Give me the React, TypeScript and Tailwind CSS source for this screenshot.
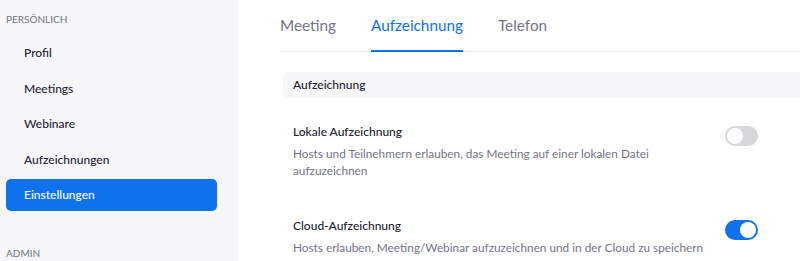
import React from "react";

const navItems = ["Profil", "Meetings", "Webinare", "Aufzeichnungen", "Einstellungen"];
const tabs = ["Meeting", "Aufzeichnung", "Telefon"];

function Toggle({ on }: { on: boolean }) {
  return (
    <div
      className={`w-[33px] h-[20px] rounded-full flex items-center p-[2px] shrink-0 ${
        on ? "bg-[#0e72ed] justify-end" : "bg-[#d6d6db] justify-start"
      }`}
    >
      <div className="w-[16px] h-[16px] rounded-full bg-white" />
    </div>
  );
}

function SettingRow({ title, desc, on }: { title: string; desc: string; on: boolean }) {
  return (
    <div className="flex items-start justify-between pl-[10px] pr-[42px]">
      <div className="max-w-[425px]">
        <div className="text-[12px] leading-[17px] font-medium text-[#232333]">{title}</div>
        <div className="mt-[5px] text-[11.8px] leading-[17px] text-[#747487]">{desc}</div>
      </div>
      <div className="mt-[2.5px]">
        <Toggle on={on} />
      </div>
    </div>
  );
}

export default function App() {
  return (
    <div className="flex w-[800px] h-[261px] overflow-hidden bg-white font-['Lato',sans-serif]">
      {/* Sidebar */}
      <aside className="w-[238px] shrink-0 bg-[#f7f7fa] px-[6px] pt-[12px]">
        <div className="text-[10px] leading-[14px] uppercase text-[#6e7680]">Persönlich</div>
        <nav className="mt-[11px] flex flex-col gap-[3.5px] w-[211px]">
          {navItems.map((item) => {
            const active = item === "Einstellungen";
            return (
              <div
                key={item}
                className={`h-8 flex items-center pl-[18px] rounded-[5px] text-[12px] font-medium ${
                  active ? "bg-[#0e72ed] text-white" : "text-[#232333]"
                }`}
              >
                {item}
              </div>
            );
          })}
        </nav>
        <div className="mt-[35px] text-[10px] leading-[14px] uppercase text-[#6e7680]">Admin</div>
      </aside>

      {/* Content */}
      <main className="flex-1 pl-[42px]">
        <div className="flex gap-[35px] h-[52px] border-b border-[#ededf0]">
          {tabs.map((tab) => {
            const active = tab === "Aufzeichnung";
            return (
              <div
                key={tab}
                className={`pt-[14px] text-[15.3px] leading-[22px] ${
                  active
                    ? "text-[#0e72ed] border-b-2 border-[#0e72ed] mb-[-1px]"
                    : "text-[#747487]"
                }`}
              >
                {tab}
              </div>
            );
          })}
        </div>

        <div className="ml-[3px]">
          <div className="mt-[20px] h-[26px] flex items-center pl-[10px] rounded-l-[5px] bg-[#f7f7fa] text-[12px] font-medium text-[#232333]">
            Aufzeichnung
          </div>

          <div className="mt-[25px]">
            <SettingRow
              title="Lokale Aufzeichnung"
              desc="Hosts und Teilnehmern erlauben, das Meeting auf einer lokalen Datei aufzuzeichnen"
              on={false}
            />
          </div>
          <div className="mt-[38px]">
            <SettingRow
              title="Cloud-Aufzeichnung"
              desc="Hosts erlauben, Meeting/Webinar aufzuzeichnen und in der Cloud zu speichern"
              on={true}
            />
          </div>
        </div>
      </main>
    </div>
  );
}
